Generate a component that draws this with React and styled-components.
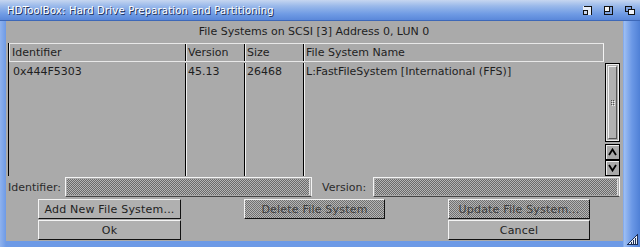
import styled, { createGlobalStyle } from "styled-components";

const Global = createGlobalStyle`
  html, body { margin: 0; padding: 0; background: #5f8fe0; }
  body { font-family: "DejaVu Sans", "Liberation Sans", sans-serif; }
`;

const Window = styled.div`
  position: relative;
  width: 640px;
  height: 247px;
  display: flex;
  flex-direction: column;
  background: linear-gradient(to right, #8fb2ee 0px, #6d9ae6 6px, #6d9ae6 623px, #9ebff3 624px, #6b98e6 632px, #4f80d6 640px);
  overflow: hidden;
`;

const TitleBar = styled.div`
  height: 21px;
  display: flex;
  align-items: center;
  padding-left: 7px;
  box-sizing: border-box;
  background: linear-gradient(#c6d6f0 0%, #9ab9ea 30%, #6f9be4 70%, #5a88da 100%);
  border-bottom: 1px solid #3d68b8;
`;

const Title = styled.span`
  flex: 1;
  color: #fff;
  font-size: 10px;
  letter-spacing: 0.2px;
  text-shadow: 1px 1px 0 #1d2f55;
  white-space: nowrap;
`;

const Gadgets = styled.div`
  display: flex;
  align-items: center;
  gap: 12px;
  margin-right: 5px;
  svg { display: block; }
`;

const Middle = styled.div`
  flex: 1;
  display: flex;
  padding: 0 17px 6px 6px;
`;

const Content = styled.div`
  flex: 1;
  display: flex;
  flex-direction: column;
  background: #aaaaaa;
  padding: 0 3px 1px 2px;
  color: #1e1e1e;
  font-size: 11px;
`;

const Heading = styled.div`
  height: 22px;
  line-height: 22px;
  text-align: center;
`;

const ListArea = styled.div`
  height: 133px;
  display: flex;
`;

const List = styled.div`
  flex: 1;
  display: flex;
  flex-direction: column;
  border-left: 1px solid #000;
`;

const Cols = styled.div`
  display: grid;
  grid-template-columns: 176px 59px 59px 1fr;
`;

const HeaderRow = styled(Cols)`
  height: 17px;
  border-top: 1px solid #e8e8e8;
  border-bottom: 1px solid #e8e8e8;
  border-right: 1px solid #f4f4f4;
`;

const HeadCell = styled.div`
  line-height: 17px;
  padding-left: ${(p) => (p.$first ? 3 : 2)}px;
  border-left: ${(p) => (p.$first ? "none" : "1px solid #000")};
  box-shadow: inset 1px 0 0 #e8e8e8;
  white-space: nowrap;
`;

const Body = styled(Cols)`
  flex: 1;
  margin-top: 1px;
`;

const Cell = styled.div`
  padding: 2px 0 0 ${(p) => (p.$first ? 4 : 2)}px;
  border-left: ${(p) => (p.$first ? "none" : "1px solid #000")};
  box-shadow: ${(p) => (p.$first ? "none" : "inset 1px 0 0 #f0f0f0")};
  white-space: nowrap;
  line-height: 14px;
`;

const Scroller = styled.div`
  width: 15px;
  margin-left: 1px;
  display: flex;
  flex-direction: column;
  padding-top: 20px;
`;

const Track = styled.div`
  flex: 1;
  border: 1px solid #000;
  box-shadow: inset 1px 1px 0 #eee, inset -1px -1px 0 #eee;
  padding: 2px;
  display: flex;
`;

const Knob = styled.div`
  flex: 1;
  background: #b2b2b2;
  border-top: 1px solid #f2f2f2;
  border-left: 1px solid #f2f2f2;
  border-right: 1px solid #555;
  border-bottom: 1px solid #555;
  display: flex;
  align-items: center;
  justify-content: center;
`;

const Arrow = styled.div`
  height: 16px;
  margin-top: ${(p) => (p.$gap ? 2 : 0)}px;
  box-sizing: border-box;
  border: 1px solid #000;
  box-shadow: inset 1px 1px 0 #eee;
  display: flex;
  align-items: center;
  justify-content: center;
  svg { display: block; }
`;

const FieldRow = styled.div`
  height: 20px;
  margin-top: 1px;
  display: flex;
  align-items: center;
`;

const Label = styled.span`
  width: ${(p) => p.$w}px;
  margin-left: ${(p) => p.$ml || 0}px;
  color: #2a2a2a;
  white-space: nowrap;
`;

const Field = styled.div`
  height: 20px;
  box-sizing: border-box;
  width: ${(p) => (p.$w ? `${p.$w}px` : "auto")};
  flex: ${(p) => (p.$w ? "none" : 1)};
  border-top: 1px solid #f4f4f4;
  border-left: 1px solid #f4f4f4;
  border-right: 1px solid #f4f4f4;
  border-bottom: 1px solid #444;
  padding: 1px;
  display: flex;
`;

const Ghost = styled.div`
  flex: 1;
  background: repeating-conic-gradient(#6a6a6a 0 25%, #b4b4b4 0 50%) 0 0 / 2px 2px;
  border-right: 1px solid #ddd;
`;

const Buttons = styled.div`
  margin-top: 2px;
  padding-left: 30px;
  display: grid;
  grid-template-columns: 143px 141px 142px;
  column-gap: 63px;
  row-gap: 1px;
  grid-auto-rows: 20px;
`;

const Button = styled.div`
  position: relative;
  grid-column: ${(p) => p.$col};
  box-sizing: border-box;
  border-top: 1px solid #f4f4f4;
  border-left: 1px solid #f4f4f4;
  border-right: 1px solid #111;
  border-bottom: 1px solid #111;
  background: #b0b0b0;
  display: flex;
  align-items: center;
  justify-content: center;
  color: #222;
  white-space: nowrap;
  letter-spacing: 0.2px;

  ${(p) =>
    p.$disabled &&
    `
    color: #222;
    &::after {
      content: "";
      position: absolute;
      inset: 0;
      background: repeating-conic-gradient(rgba(70,70,70,0.6) 0 25%, rgba(200,200,200,0.2) 0 50%) 0 0 / 2px 2px;
    }
  `}
`;

const Sizer = styled.svg`
  position: absolute;
  right: 2px;
  bottom: 2px;
`;

const Iconify = () => (
  <svg width="9" height="9" viewBox="0 0 9 9" shapeRendering="crispEdges">
    <rect x="0" y="0" width="9" height="9" fill="#e8eef8" />
    <path d="M0.5 0.5H8.5V8.5" fill="none" stroke="#111" />
    <rect x="0" y="4" width="5" height="5" fill="#111" />
    <rect x="1" y="5" width="3" height="3" fill="#c8d4ea" />
  </svg>
);

const Zoom = () => (
  <svg width="9" height="9" viewBox="0 0 9 9" shapeRendering="crispEdges">
    <rect x="0.5" y="0.5" width="8" height="8" fill="#7fa3e0" stroke="#111" />
    <rect x="1" y="1" width="4" height="4" fill="#f4f4f4" />
    <path d="M5.5 1V5.5H1" fill="none" stroke="#111" />
  </svg>
);

const Depth = () => (
  <svg width="10" height="9" viewBox="0 0 10 9" shapeRendering="crispEdges">
    <rect x="0.5" y="0.5" width="6" height="5" fill="#7fa3e0" stroke="#111" />
    <rect x="3.5" y="3.5" width="6" height="5" fill="#eef2fa" stroke="#111" />
  </svg>
);

const Grip = () => (
  <svg width="4" height="6" viewBox="0 0 4 6" shapeRendering="crispEdges">
    {[0, 2, 4].map((y) => (
      <g key={y}>
        <rect x="0" y={y} width="1" height="1" fill="#555" />
        <rect x="2" y={y} width="1" height="1" fill="#555" />
        <rect x="1" y={y + 1} width="1" height="1" fill="#eee" />
        <rect x="3" y={y + 1} width="1" height="1" fill="#eee" />
      </g>
    ))}
  </svg>
);

const Chevron = ({ up }) => (
  <svg width="9" height="8" viewBox="0 0 9 8">
    <path
      d={up ? "M1 7L4.5 1.5L8 7" : "M1 1L4.5 6.5L8 1"}
      fill="none"
      stroke="#000"
      strokeWidth="1.8"
    />
  </svg>
);

export default function App() {
  return (
    <>
      <Global />
      <Window>
        <TitleBar>
          <Title>HDToolBox: Hard Drive Preparation and Partitioning</Title>
          <Gadgets>
            <Iconify />
            <Zoom />
            <Depth />
          </Gadgets>
        </TitleBar>
        <Middle>
          <Content>
            <Heading>File Systems on SCSI [3] Address 0, LUN 0</Heading>
            <ListArea>
              <List>
                <HeaderRow>
                  <HeadCell $first>Identifier</HeadCell>
                  <HeadCell>Version</HeadCell>
                  <HeadCell>Size</HeadCell>
                  <HeadCell>File System Name</HeadCell>
                </HeaderRow>
                <Body>
                  <Cell $first>0x444F5303</Cell>
                  <Cell>45.13</Cell>
                  <Cell>26468</Cell>
                  <Cell>L:FastFileSystem [International (FFS)]</Cell>
                </Body>
              </List>
              <Scroller>
                <Track>
                  <Knob>
                    <Grip />
                  </Knob>
                </Track>
                <Arrow $gap>
                  <Chevron up />
                </Arrow>
                <Arrow>
                  <Chevron />
                </Arrow>
              </Scroller>
            </ListArea>
            <FieldRow>
              <Label $w={57}>Identifier:</Label>
              <Field $w={247}>
                <Ghost />
              </Field>
              <Label $w={51} $ml={10}>
                Version:
              </Label>
              <Field>
                <Ghost />
              </Field>
            </FieldRow>
            <Buttons>
              <Button $col={1}>Add New File System...</Button>
              <Button $col={2} $disabled>
                Delete File System
              </Button>
              <Button $col={3} $disabled>
                Update File System...
              </Button>
              <Button $col={1}>Ok</Button>
              <Button $col={3}>Cancel</Button>
            </Buttons>
          </Content>
        </Middle>
        <Sizer width="11" height="11" viewBox="0 0 11 11" shapeRendering="crispEdges">
          <path d="M0 11L11 0V11Z" fill="#e8eef8" />
          <path d="M0.5 10.5L10.5 0.5V10.5Z" fill="none" stroke="#1d2f55" />
          <path d="M4 10V8M6 10V6M8 10V4" stroke="#1d2f55" />
        </Sizer>
      </Window>
    </>
  );
}
